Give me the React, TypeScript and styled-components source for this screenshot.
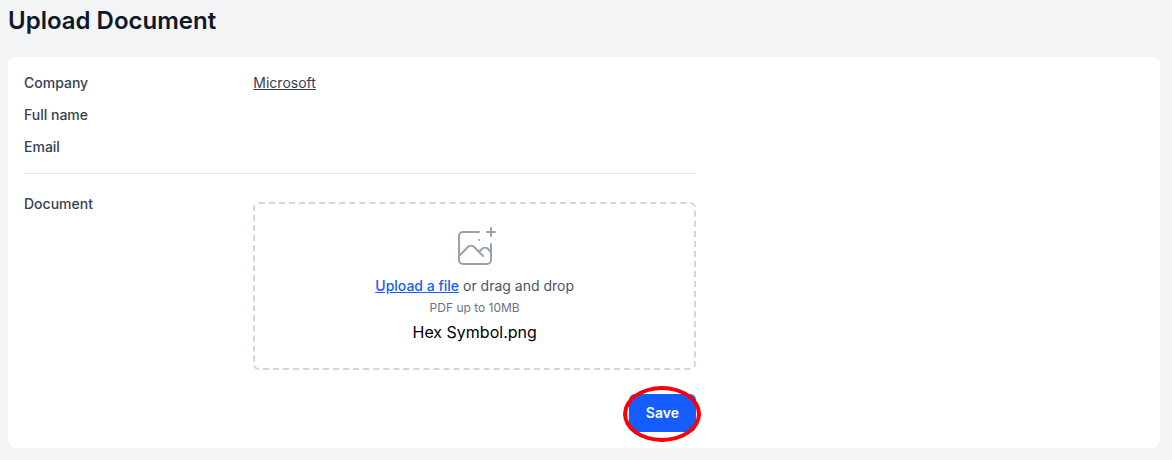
import React from "react";
import styled, { createGlobalStyle } from "styled-components";

const GlobalStyle = createGlobalStyle`
  *, *::before, *::after { box-sizing: border-box; }
  body {
    margin: 0;
    background: #f3f4f6;
    color: #000;
    font-family: Inter, "Liberation Sans", sans-serif;
    font-size: 16px;
    line-height: 24px;
    -webkit-font-smoothing: antialiased;
  }
`;

const Page = styled.main`
  padding: 5px 12px 12px 8px;
`;

const Title = styled.h1`
  margin: 0 0 20px;
  font-size: 24px;
  line-height: 32px;
  font-weight: 600;
  color: #101828;
`;

const Card = styled.section`
  padding: 16px;
  border-radius: 8px;
  background: #fff;
`;

const Form = styled.form`
  max-width: 672px;
`;

const Details = styled.dl`
  display: flex;
  flex-direction: column;
  gap: 12px;
  margin: 0;
  padding-bottom: 16px;
  border-bottom: 1px solid #e5e7eb;
`;

const Row = styled.div`
  display: grid;
  grid-template-columns: repeat(3, 1fr);
  column-gap: 16px;
  font-size: 14px;
  line-height: 20px;
  color: #364153;
`;

const Term = styled.dt`
  font-weight: 500;
`;

const Value = styled.dd`
  grid-column: span 2;
  margin: 0;
`;

const CompanyLink = styled.a`
  color: inherit;
  text-decoration: underline;
`;

const UploadRow = styled(Row)`
  padding-top: 20px;
`;

const FieldLabel = styled.label`
  font-weight: 500;
`;

const DropZone = styled.div`
  grid-column: span 2;
  display: flex;
  flex-direction: column;
  align-items: center;
  gap: 4px;
  margin-top: 8px;
  padding: 20px 24px 24px;
  border: 2px dashed #d1d5dc;
  border-radius: 6px;
`;

const ImageIcon = styled.svg`
  width: 48px;
  height: 48px;
  color: #99a1af;
`;

const Prompt = styled.p`
  margin: 0;
  color: #4a5565;
`;

const UploadLabel = styled.label`
  font-weight: 500;
  color: #155dfc;
  text-decoration: underline;
  cursor: pointer;
`;

const FileInput = styled.input`
  position: absolute;
  width: 1px;
  height: 1px;
  overflow: hidden;
  clip-path: inset(50%);
`;

const Hint = styled.p`
  margin: 0;
  font-size: 12px;
  line-height: 16px;
  color: #6a7282;
`;

const FileName = styled.p`
  margin: 0;
  font-size: 16px;
  line-height: 24px;
  color: #000;
`;

const Actions = styled.div`
  display: flex;
  justify-content: flex-end;
  margin-top: 24px;
`;

const Highlight = styled.div`
  position: relative;

  &::after {
    content: "";
    position: absolute;
    inset: -8px -5px -10px -6px;
    border: 4px solid #fb0007;
    border-radius: 50%;
    pointer-events: none;
  }
`;

const SaveButton = styled.button`
  display: block;
  padding: 8px 16px;
  border: 1px solid transparent;
  border-radius: 6px;
  background: #155dfc;
  color: #fff;
  font: 600 14px/20px Inter, "Liberation Sans", sans-serif;
  cursor: pointer;
`;

export default function App() {
  const [fileName, setFileName] = React.useState("Hex Symbol.png");

  return (
    <>
      <GlobalStyle />
      <Page>
        <Title>Upload Document</Title>
        <Card>
          <Form onSubmit={(event) => event.preventDefault()}>
            <Details>
              <Row>
                <Term>Company</Term>
                <Value>
                  <CompanyLink href="#company">Microsoft</CompanyLink>
                </Value>
              </Row>
              <Row>
                <Term>Full name</Term>
                <Value />
              </Row>
              <Row>
                <Term>Email</Term>
                <Value />
              </Row>
            </Details>
            <UploadRow>
              <FieldLabel htmlFor="document">Document</FieldLabel>
              <DropZone>
                <ImageIcon viewBox="0 0 48 48" fill="none" stroke="currentColor" aria-hidden="true">
                  <path
                    d="M28 8H12a4 4 0 00-4 4v20m32-12v8m0 0v8a4 4 0 01-4 4H12a4 4 0 01-4-4v-4m32-4l-3.172-3.172a4 4 0 00-5.656 0L28 28M8 32l9.172-9.172a4 4 0 015.656 0L28 28m0 0l4 4m4-24h8m-4-4v8m-12 4h.02"
                    strokeWidth="2"
                    strokeLinecap="round"
                    strokeLinejoin="round"
                  />
                </ImageIcon>
                <Prompt>
                  <UploadLabel htmlFor="document">Upload a file</UploadLabel> or drag and drop
                  <FileInput
                    id="document"
                    type="file"
                    onChange={(event) => {
                      const file = event.target.files?.[0];
                      if (file) setFileName(file.name);
                    }}
                  />
                </Prompt>
                <Hint>PDF up to 10MB</Hint>
                <FileName>{fileName}</FileName>
              </DropZone>
            </UploadRow>
            <Actions>
              <Highlight>
                <SaveButton type="submit">Save</SaveButton>
              </Highlight>
            </Actions>
          </Form>
        </Card>
      </Page>
    </>
  );
}
